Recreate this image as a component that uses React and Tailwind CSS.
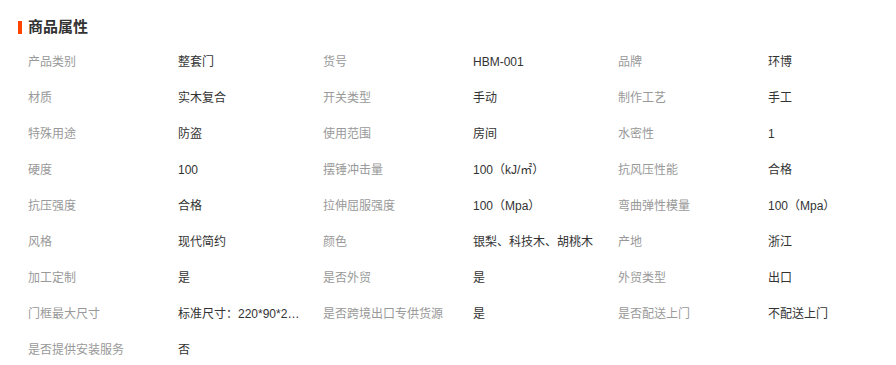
import React from 'react';

const rows = [
  [['产品类别', '整套门'], ['货号', 'HBM-001'], ['品牌', '环博']],
  [['材质', '实木复合'], ['开关类型', '手动'], ['制作工艺', '手工']],
  [['特殊用途', '防盗'], ['使用范围', '房间'], ['水密性', '1']],
  [['硬度', '100'], ['摆锤冲击量', '100（kJ/㎡）'], ['抗风压性能', '合格']],
  [['抗压强度', '合格'], ['拉伸屈服强度', '100（Mpa）'], ['弯曲弹性模量', '100（Mpa）']],
  [['风格', '现代简约'], ['颜色', '银梨、科技木、胡桃木'], ['产地', '浙江']],
  [['加工定制', '是'], ['是否外贸', '是'], ['外贸类型', '出口']],
  [['门框最大尺寸', '标准尺寸：220*90*20mm'], ['是否跨境出口专供货源', '是'], ['是否配送上门', '不配送上门']],
  [['是否提供安装服务', '否']],
];

export default function App() {
  return (
    <div
      className="w-[896px] h-[365px] bg-white text-[12px] overflow-hidden"
      style={{ fontFamily: '"Liberation Sans", "Noto Sans CJK SC", sans-serif' }}
    >
      {/* 标题 */}
      <div className="h-[44px] pt-[18px] pl-[18px] flex items-start">
        <div className="flex items-center h-[18px]">
          <span className="w-[4px] h-[13px] bg-[#ff4400]" />
          <span className="ml-[6px] text-[15px] leading-[18px] font-bold text-[#333]">商品属性</span>
        </div>
      </div>

      {/* 属性列表 */}
      <div className="pl-[28px]">
        {rows.map((row, i) => (
          <div key={i} className="flex h-[36px] leading-[36px]">
            {row.map(([label, value], j) => (
              <div key={j} className="flex w-[295px] shrink-0">
                <span className="w-[150px] shrink-0 text-[#999] whitespace-nowrap">{label}</span>
                <span className="w-[125px] truncate text-[#333]">{value}</span>
              </div>
            ))}
          </div>
        ))}
      </div>
    </div>
  );
}
